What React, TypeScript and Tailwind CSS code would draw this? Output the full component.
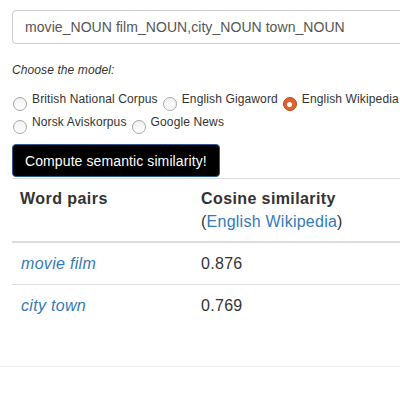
import React from 'react'

const modelRows = [
  [
    { name: 'British National Corpus', checked: false },
    { name: 'English Gigaword', checked: false },
    { name: 'English Wikipedia', checked: true },
  ],
  [
    { name: 'Norsk Aviskorpus', checked: false },
    { name: 'Google News', checked: false },
  ],
]

const rows = [
  { pair: 'movie film', score: '0.876' },
  { pair: 'city town', score: '0.769' },
]

function Radio({ checked }: { checked: boolean }) {
  if (checked) {
    return (
      <span className="mt-[6px] w-[14px] h-[14px] shrink-0 rounded-full bg-[#e3602f] border border-[#b84a20] flex items-center justify-center">
        <span className="w-[5px] h-[5px] rounded-full bg-white" />
      </span>
    )
  }
  return (
    <span className="mt-[6px] w-[14px] h-[14px] shrink-0 rounded-full border border-[#a6a6a6] bg-gradient-to-b from-[#f2f2f2] to-white" />
  )
}

export default function App() {
  return (
    <div className="w-[400px] h-[400px] overflow-hidden bg-white text-[#333] font-['Liberation_Sans',Arial,sans-serif]">
      <div className="w-[480px] pl-[12px] pt-[10px]">
        {/* Query input */}
        <div className="h-[34px] rounded-[4px] border border-[#ccc] px-[12px] flex items-center text-[14px] tracking-[0.06px] text-[#555]">
          movie_NOUN film_NOUN,city_NOUN town_NOUN
        </div>

        <p className="mt-[18px] text-[12px] leading-[17px] italic tracking-[0.1px]">Choose the model:</p>

        {/* Model choice */}
        <div className="mt-[12px] flex flex-col gap-y-[4px] text-[12px] leading-[17px] tracking-[0.13px]">
          {modelRows.map((row, i) => (
            <div key={i} className="flex">
              {row.map((m) => (
                <label key={m.name} className="flex items-start h-[19px] pl-px pr-[4px] whitespace-nowrap">
                  <Radio checked={m.checked} />
                  <span className="ml-[5px]">{m.name}</span>
                </label>
              ))}
            </div>
          ))}
        </div>

        <button className="mt-[11px] h-[33px] px-[12px] rounded-[4px] bg-black border border-[#2a5a8c] text-white text-[14px] leading-[20px] tracking-[0.1px]">
          Compute semantic similarity!
        </button>

        {/* Results */}
        <table className="mt-px w-[468px] border-collapse text-[16px] tracking-[0.3px]">
          <thead>
            <tr className="border-t border-[#ddd] border-b-2">
              <th className="w-[181px] px-[8px] py-[8px] leading-[23px] text-left align-top font-bold tracking-[0.45px]">Word pairs</th>
              <th className="px-[8px] py-[8px] leading-[23px] text-left align-top font-bold tracking-[0.4px]">
                Cosine similarity
                <br />
                <span className="font-normal tracking-[0.25px]">
                  (<span className="text-[#337ab7]">English Wikipedia</span>)
                </span>
              </th>
            </tr>
          </thead>
          <tbody>
            {rows.map((r, i) => (
              <tr key={r.pair} className={i < rows.length - 1 ? 'border-b border-[#ddd]' : ''}>
                <td className="px-[8px] pt-[9px] pb-[8px] leading-6 italic text-[#337ab7] pl-[9px]">{r.pair}</td>
                <td className="px-[8px] pt-[9px] pb-[8px] leading-6">{r.score}</td>
              </tr>
            ))}
          </tbody>
        </table>
      </div>

      <div className="mt-[40px] border-t border-[#eee]" />
    </div>
  )
}
